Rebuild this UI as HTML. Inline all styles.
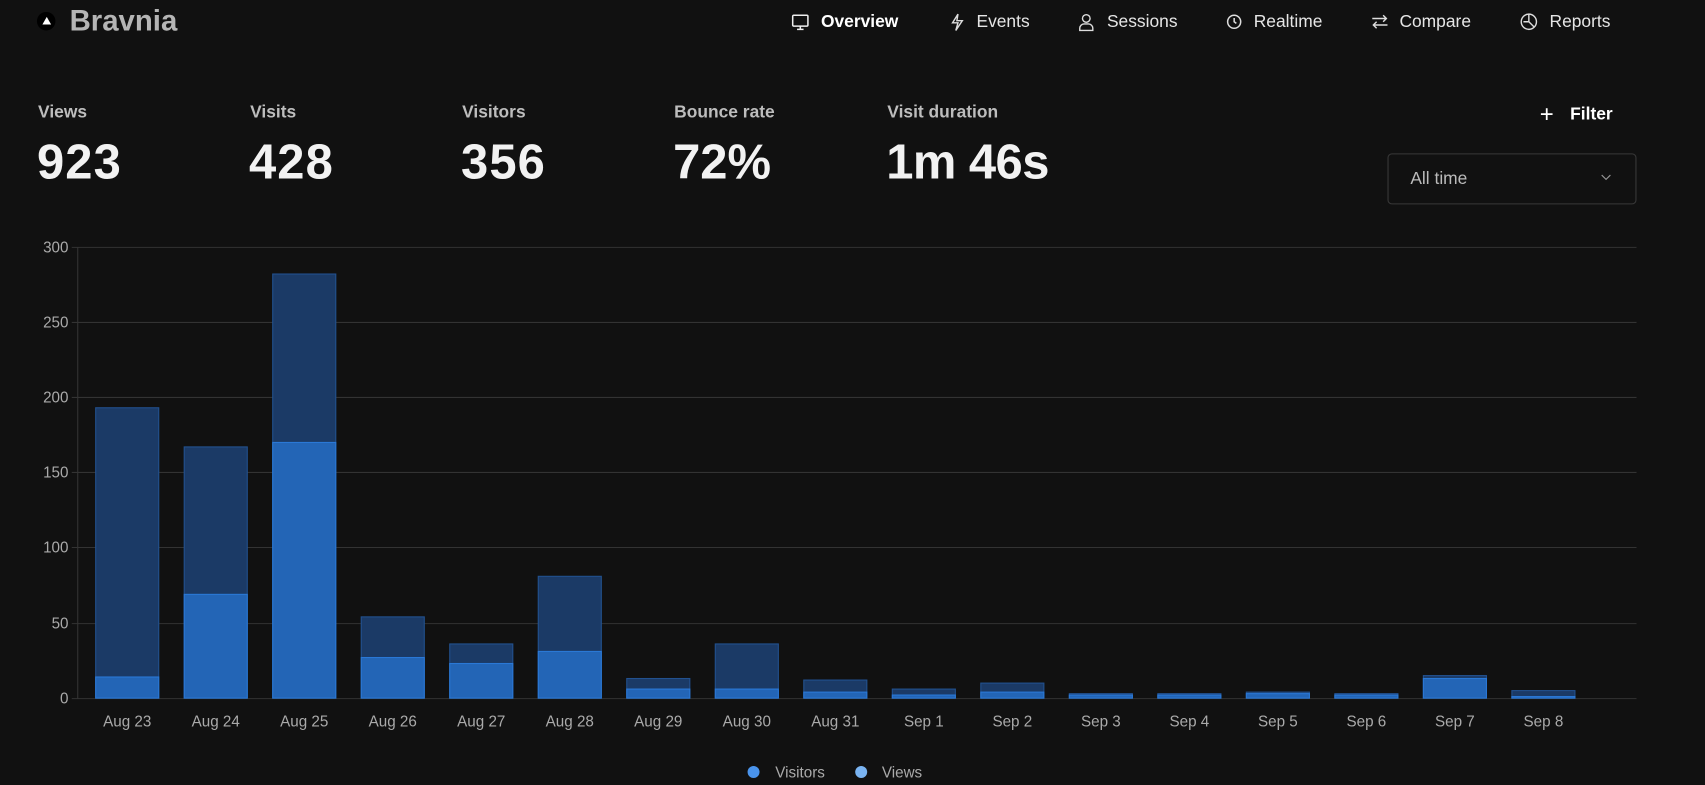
<!DOCTYPE html>
<html><head><meta charset="utf-8"><style>
html,body{margin:0;padding:0;background:#111;width:1705px;height:785px;overflow:hidden}
#w{position:absolute;left:0;top:0;width:1568px;height:722px;transform:scale(1.08737);transform-origin:0 0;font-family:"Liberation Sans",sans-serif;color:#eee}
.a{position:absolute;white-space:nowrap}
.nav{font-size:16px;color:#e6e6e6;top:12px}
.lab{font-size:16px;font-weight:bold;color:#bdbdbd;top:95px}
.val{font-size:45px;font-weight:bold;color:#f2f2f2;top:123px}
svg text{font-family:"Liberation Sans",sans-serif}
</style></head><body><div id="w">
<div class="a" style="left:34px;top:11px;width:17px;height:17px;border-radius:50%;background:#000"></div>
<svg class="a" style="left:38px;top:14px" width="10" height="10"><path d="M5 1.5 L9 8.5 L1 8.5Z" fill="#fff"/></svg>
<div class="a" style="left:64px;top:4px;font-size:27px;font-weight:bold;color:#b5b5b5">Bravnia</div>

<svg class="a" style="left:727px;top:11px" width="18" height="18" fill="none" stroke="#eee" stroke-width="1.4"><rect x="2" y="3" width="14" height="10" rx="1"/><path d="M9 13v3M6 16h6"/></svg>
<div class="a nav" style="left:755px;font-weight:bold;color:#fff">Overview</div>
<svg class="a" style="left:871px;top:11px" width="18" height="18" fill="none" stroke="#ddd" stroke-width="1.3"><path d="M10 2L5 10h5l-2 7 6-9H9l1-6z"/></svg>
<div class="a nav" style="left:898px">Events</div>
<svg class="a" style="left:990px;top:11px" width="18" height="18" fill="none" stroke="#ddd" stroke-width="1.3"><circle cx="9" cy="6" r="3.5"/><path d="M3 17v-2a4 4 0 014-4h4a4 4 0 014 4v2z"/></svg>
<div class="a nav" style="left:1018px">Sessions</div>
<svg class="a" style="left:1126px;top:11px" width="18" height="18" fill="none" stroke="#ddd" stroke-width="1.4"><circle cx="9" cy="9" r="6"/><path d="M9 5.5V9l2 1.5"/></svg>
<div class="a nav" style="left:1153px">Realtime</div>
<svg class="a" style="left:1260px;top:11px" width="18" height="18" fill="none" stroke="#ddd" stroke-width="1.3"><path d="M2 6h13M12 3l3 3-3 3M16 12H3M6 9l-3 3 3 3"/></svg>
<div class="a nav" style="left:1287px">Compare</div>
<svg class="a" style="left:1397px;top:11px" width="18" height="18" fill="none" stroke="#ddd" stroke-width="1.3"><circle cx="9" cy="9" r="7"/><path d="M9 2v7l5 5M9 9H4"/></svg>
<div class="a nav" style="left:1425px">Reports</div>

<div class="a lab" style="left:35px">Views</div><div class="a val" style="left:34px;letter-spacing:1px">923</div>
<div class="a lab" style="left:230px">Visits</div><div class="a val" style="left:229px;letter-spacing:1px">428</div>
<div class="a lab" style="left:425px">Visitors</div><div class="a val" style="left:424px;letter-spacing:1px">356</div>
<div class="a lab" style="left:620px">Bounce rate</div><div class="a val" style="left:619px">72%</div>
<div class="a lab" style="left:816px">Visit duration</div><div class="a val" style="left:815px;letter-spacing:-0.5px">1m 46s</div>

<div class="a" style="left:1416px;top:92px;font-size:22px;color:#fff;font-weight:300">+</div>
<div class="a" style="left:1444px;top:97px;font-size:16px;font-weight:bold;color:#fff">Filter</div>
<div class="a" style="left:1276px;top:141px;width:227px;height:45px;border:1px solid #383838;border-radius:4px"></div>
<div class="a" style="left:1297px;top:156px;font-size:16px;color:#bbb">All time</div>
<svg class="a" style="left:1471px;top:158px" width="12" height="10" fill="none" stroke="#999" stroke-width="1"><path d="M2 3l4 4 4-4"/></svg>

<svg class="a" style="left:0;top:0" width="1568" height="722">
<g stroke="#333" stroke-width="1">
<path d="M66 227.5H1505M66 296.5H1505M66 365.5H1505M66 434.5H1505M66 503.5H1505M66 573.5H1505M66 642.5H1505M71.5 227V642"/>
</g>
<g font-size="14" fill="#aaa" text-anchor="end">
<text x="63" y="232">300</text><text x="63" y="301">250</text><text x="63" y="370">200</text><text x="63" y="439">150</text><text x="63" y="508">100</text><text x="63" y="578">50</text><text x="63" y="647">0</text>
</g>
<g fill="#1b3a66" stroke="#22518f" stroke-width="1">
<rect x="88" y="375" width="58" height="267"/>
<rect x="169.4" y="411" width="58" height="231"/>
<rect x="250.8" y="252" width="58" height="390"/>
<rect x="332.2" y="567.3" width="58" height="74.7"/>
<rect x="413.6" y="592.2" width="58" height="49.8"/>
<rect x="495" y="530" width="58" height="112"/>
<rect x="576.4" y="624" width="58" height="18"/>
<rect x="657.8" y="592.2" width="58" height="49.8"/>
<rect x="739.2" y="625.4" width="58" height="16.6"/>
<rect x="820.6" y="633.7" width="58" height="8.3"/>
<rect x="902" y="628.2" width="58" height="13.8"/>
<rect x="983.4" y="637.9" width="58" height="4.1"/>
<rect x="1064.8" y="637.9" width="58" height="4.1"/>
<rect x="1146.2" y="636.5" width="58" height="5.5"/>
<rect x="1227.6" y="637.9" width="58" height="4.1"/>
<rect x="1309" y="621.3" width="58" height="20.7"/>
<rect x="1390.4" y="635.1" width="58" height="6.9"/>
</g>
<g fill="#2365b6" stroke="#2a78d6" stroke-width="1">
<rect x="88" y="622.6" width="58" height="19.4"/>
<rect x="169.4" y="546.6" width="58" height="95.4"/>
<rect x="250.8" y="406.9" width="58" height="235.1"/>
<rect x="332.2" y="604.7" width="58" height="37.3"/>
<rect x="413.6" y="610.2" width="58" height="31.8"/>
<rect x="495" y="599.1" width="58" height="42.9"/>
<rect x="576.4" y="633.7" width="58" height="8.3"/>
<rect x="657.8" y="633.7" width="58" height="8.3"/>
<rect x="739.2" y="636.5" width="58" height="5.5"/>
<rect x="820.6" y="639.2" width="58" height="2.8"/>
<rect x="902" y="636.5" width="58" height="5.5"/>
<rect x="983.4" y="639.2" width="58" height="2.8"/>
<rect x="1064.8" y="639.2" width="58" height="2.8"/>
<rect x="1146.2" y="637.9" width="58" height="4.1"/>
<rect x="1227.6" y="639.2" width="58" height="2.8"/>
<rect x="1309" y="624" width="58" height="18"/>
<rect x="1390.4" y="640.6" width="58" height="1.4"/>
</g>
<g font-size="14" fill="#aaa" text-anchor="middle">
<text x="117" y="668">Aug 23</text><text x="198.4" y="668">Aug 24</text><text x="279.8" y="668">Aug 25</text><text x="361.2" y="668">Aug 26</text><text x="442.6" y="668">Aug 27</text><text x="524" y="668">Aug 28</text><text x="605.4" y="668">Aug 29</text><text x="686.8" y="668">Aug 30</text><text x="768.2" y="668">Aug 31</text><text x="849.6" y="668">Sep 1</text><text x="931" y="668">Sep 2</text><text x="1012.4" y="668">Sep 3</text><text x="1093.8" y="668">Sep 4</text><text x="1175.2" y="668">Sep 5</text><text x="1256.6" y="668">Sep 6</text><text x="1338" y="668">Sep 7</text><text x="1419.4" y="668">Sep 8</text>
</g>
<circle cx="693" cy="710" r="5.5" fill="#4a94ec"/>
<text x="713" y="715" font-size="14" fill="#aaa">Visitors</text>
<circle cx="792" cy="710" r="5.5" fill="#7ab4f2"/>
<text x="811" y="715" font-size="14" fill="#aaa">Views</text>
</svg>
</div></body></html>
